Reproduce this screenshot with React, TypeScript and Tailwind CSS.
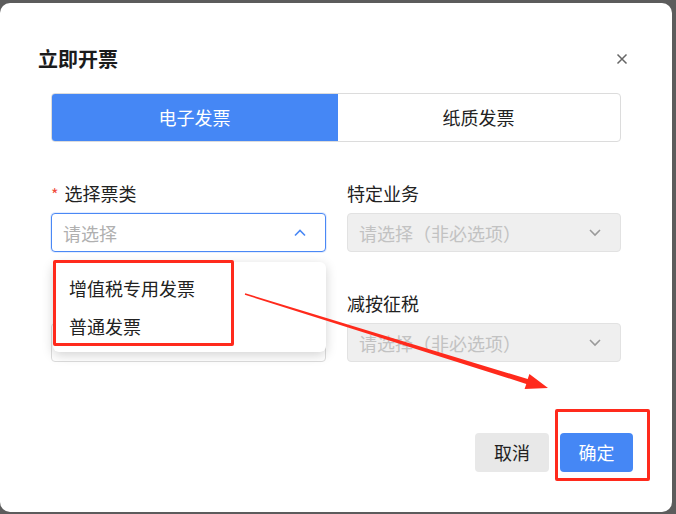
import React from "react";

const FONT = { fontFamily: '"Noto Sans CJK SC", "Noto Sans", sans-serif' };

function Chevron({ up, className }: { up?: boolean; className?: string }) {
  return (
    <svg width="14" height="9" viewBox="0 0 14 9" className={className} fill="none">
      {up ? (
        <path d="M2 7.5 L7 2.5 L12 7.5" stroke="currentColor" strokeWidth="1.6" />
      ) : (
        <path d="M2 2 L7 7 L12 2" stroke="currentColor" strokeWidth="1.6" />
      )}
    </svg>
  );
}

function Field({
  label,
  required,
  placeholder,
  disabled,
  focused,
  children,
}: {
  label: string;
  required?: boolean;
  placeholder: string;
  disabled?: boolean;
  focused?: boolean;
  children?: React.ReactNode;
}) {
  return (
    <div className="relative flex flex-col">
      <div className="h-[24px] text-[18px] leading-[24px] text-[#222]">
        {required ? <span className="mr-[6px] text-[16px] text-[#f04b3c]">*</span> : null}
        {label}
      </div>
      <div
        className={
          "mt-[8px] flex h-[39px] items-center justify-between rounded-[4px] border pl-[11px] pr-[18px] " +
          (disabled
            ? "border-[#e2e2e2] bg-[#efefef] text-[#c2c2c2]"
            : focused
              ? "border-[#4a88f5] bg-white text-[#b0b0b0] shadow-[0_0_0_1px_rgba(74,136,245,0.15)]"
              : "border-[#dcdcdc] bg-white text-[#b0b0b0]")
        }
      >
        <span className="text-[18px] leading-none">{placeholder}</span>
        <Chevron
          up={focused}
          className={focused ? "text-[#4a88f5]" : "text-[#9a9a9a]"}
        />
      </div>
      {children}
    </div>
  );
}

export default function App() {
  return (
    <div className="relative h-[514px] w-[676px] overflow-hidden bg-[#5c5c5c]" style={FONT}>
      <div className="mt-[3px] flex h-[509px] w-[672px] flex-col rounded-[10px] bg-white">
        {/* header */}
        <div className="flex items-center justify-between pl-[38px] pr-[44px] pt-[42px]">
          <h2 className="text-[20px] font-bold leading-[28px] text-[#1b1b1b]">立即开票</h2>
          <svg width="12" height="12" viewBox="0 0 12 12" className="text-[#666]">
            <path d="M1.5 1.5 L10.5 10.5 M10.5 1.5 L1.5 10.5" stroke="currentColor" strokeWidth="1.5" />
          </svg>
        </div>

        {/* tabs */}
        <div className="mx-[51px] mt-[20px] grid h-[49px] grid-cols-[285px_1fr] overflow-hidden rounded-[4px] border border-[#dcdcdc]">
          <div className="-m-px flex items-center justify-center rounded-l-[4px] bg-[#4587f5] text-[18px] text-white">
            电子发票
          </div>
          <div className="flex items-center justify-center text-[18px] text-[#222]">纸质发票</div>
        </div>

        {/* form */}
        <div className="mx-[51px] mt-[39px] grid grid-cols-[275px_274px] gap-x-[21px] gap-y-[39px]">
          <Field label="选择票类" required placeholder="请选择" focused>
            <div className="absolute left-[2px] top-[81px] z-10 w-[273px] rounded-[6px] bg-white py-[7px] shadow-[0_3px_12px_rgba(0,0,0,0.18)]">
              <div className="flex h-[38px] items-center pl-[16px] text-[18px] text-[#222]">增值税专用发票</div>
              <div className="flex h-[38px] items-center pl-[16px] text-[18px] text-[#222]">普通发票</div>
            </div>
          </Field>
          <Field label="特定业务" placeholder="请选择（非必选项）" disabled />
          <Field label="" placeholder="" />
          <Field label="减按征税" placeholder="请选择（非必选项）" disabled />
        </div>

        {/* footer */}
        <div className="mt-[71px] flex justify-end gap-[11px] pr-[39px]">
          <button className="h-[39px] w-[74px] rounded-[4px] bg-[#e8e8e8] text-[18px] text-[#222]">取消</button>
          <button className="h-[39px] w-[73px] rounded-[4px] bg-[#4587f5] text-[18px] text-white">确定</button>
        </div>
      </div>

      {/* annotations */}
      <div className="pointer-events-none absolute left-[53px] top-[260px] z-20 h-[86px] w-[181px] rounded-[2px] border-[3px] border-[#ff2a1c]" />
      <div className="pointer-events-none absolute left-[555px] top-[409px] z-20 h-[72px] w-[95px] rounded-[2px] border-[3px] border-[#ff2a1c]" />
      <svg className="pointer-events-none absolute left-0 top-0 z-20" width="676" height="514">
        <polygon
          points="244.8,294.8 245.2,293.2 527.7,379.1 529.4,373.9 548,388 524.6,389.1 526.3,383.9"
          fill="#ff2a1c"
        />
      </svg>
    </div>
  );
}
